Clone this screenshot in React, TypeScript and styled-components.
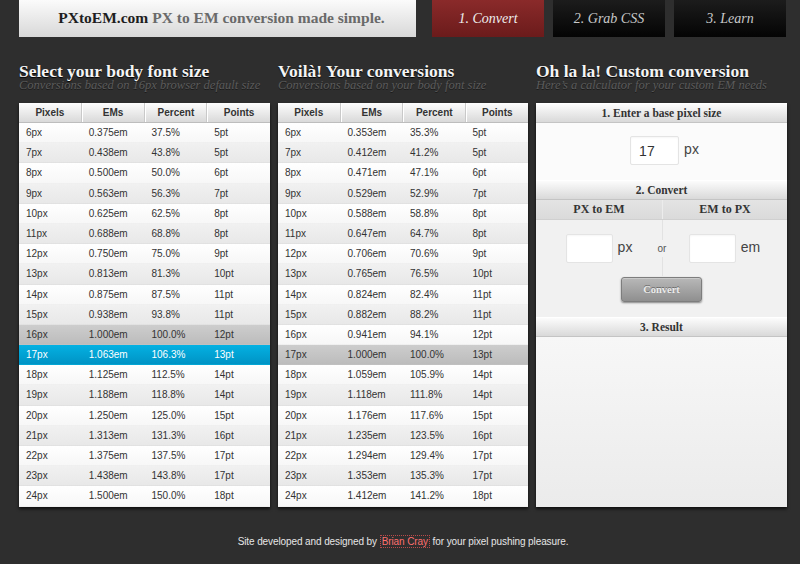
import React from "react";
import styled, { createGlobalStyle, css } from "styled-components";

const GlobalStyle = createGlobalStyle`
  html, body { margin: 0; padding: 0; background: #2e2e2e; }
  body { font-family: "Liberation Sans", Arial, sans-serif; }
  * { box-sizing: border-box; }
`;

const serif = `"Liberation Serif", "Times New Roman", serif`;
const sans = `"Liberation Sans", Arial, sans-serif`;

const Page = styled.div`
  width: 800px;
  padding: 0 13px 0 19px;
`;

const Header = styled.header`
  display: flex;
  height: 37px;
`;

const Logo = styled.div`
  width: 397px;
  height: 37px;
  background: linear-gradient(#fbfbfb, #d8d8d8);
  display: flex;
  align-items: center;
  justify-content: center;
  font-family: ${serif};
  font-weight: bold;
  font-size: 15.5px;
  color: #6a6a6a;
  padding: 0 0 1px 8px;
`;

const LogoName = styled.span`
  color: #1e1e1e;
  margin-right: 4px;
`;

const Nav = styled.nav`
  display: flex;
  gap: 9px;
  margin-left: 16px;
`;

const NavItem = styled.a<{ $active?: boolean }>`
  width: 112px;
  height: 37px;
  display: flex;
  align-items: center;
  justify-content: center;
  font-family: ${serif};
  font-style: italic;
  font-size: 14px;
  text-decoration: none;
  padding-top: 1px;
  background: ${(p) =>
    p.$active ? "linear-gradient(#8a2a2a, #6b1b1b)" : "linear-gradient(#1c1c1c, #040404)"};
  color: ${(p) => (p.$active ? "#eee" : "#c9c9c9")};
`;

const Main = styled.main`
  display: grid;
  grid-template-columns: 251px 250px 251px;
  gap: 8px;
  margin-top: 28px;
`;

const Column = styled.section`
  display: flex;
  flex-direction: column;
`;

const Title = styled.h2`
  margin: 0;
  font-family: ${serif};
  font-weight: bold;
  font-size: 17.5px;
  line-height: 13px;
  color: #f4f4f4;
  text-shadow: 0 1px 1px #000;
  white-space: nowrap;
`;

const Subtitle = styled.p`
  margin: 3px 0 14px;
  font-family: ${serif};
  font-style: italic;
  font-size: 12.5px;
  line-height: 8px;
  color: #5c5c5c;
  text-shadow: 0 1px 0 #1a1a1a;
  white-space: nowrap;
`;

const Panel = styled.div`
  height: 404px;
  background: #fff;
  box-shadow: 0 2px 3px rgba(0, 0, 0, 0.7);
  display: flex;
  flex-direction: column;
`;

const HeadRow = styled.div`
  display: grid;
  grid-template-columns: repeat(4, 1fr);
  height: 20px;
  background: linear-gradient(#fdfdfd, #d9d9d9);
  border-bottom: 1px solid #bdbdbd;
`;

const HeadCell = styled.div`
  font-family: ${sans};
  font-weight: bold;
  font-size: 10px;
  line-height: 19px;
  color: #333;
  text-align: center;
  border-left: 1px solid #fff;
  border-right: 1px solid #c9c9c9;
  &:first-child { border-left: none; }
  &:last-child { border-right: none; }
`;

type RowKind = "even" | "odd" | "base" | "selected";

const rowBg: Record<RowKind, ReturnType<typeof css>> = {
  even: css`background: linear-gradient(#ffffff, #f7f7f7); color: #333;`,
  odd: css`background: linear-gradient(#f1f1f1, #e8e8e8); color: #333;`,
  base: css`background: linear-gradient(#cdcdcd, #bcbcbc); color: #333;`,
  selected: css`background: linear-gradient(#04b1e2, #0093c5); color: #fff;`,
};

const Row = styled.div<{ $kind: RowKind }>`
  display: grid;
  grid-template-columns: repeat(4, 1fr);
  height: 20.2px;
  border-bottom: 1px solid rgba(0, 0, 0, 0.06);
  ${(p) => rowBg[p.$kind]}
`;

const Cell = styled.div`
  font-family: ${sans};
  font-size: 10px;
  line-height: 20px;
  padding-left: 7px;
`;

const leftData: string[][] = [
  ["6px", "0.375em", "37.5%", "5pt"],
  ["7px", "0.438em", "43.8%", "5pt"],
  ["8px", "0.500em", "50.0%", "6pt"],
  ["9px", "0.563em", "56.3%", "7pt"],
  ["10px", "0.625em", "62.5%", "8pt"],
  ["11px", "0.688em", "68.8%", "8pt"],
  ["12px", "0.750em", "75.0%", "9pt"],
  ["13px", "0.813em", "81.3%", "10pt"],
  ["14px", "0.875em", "87.5%", "11pt"],
  ["15px", "0.938em", "93.8%", "11pt"],
  ["16px", "1.000em", "100.0%", "12pt"],
  ["17px", "1.063em", "106.3%", "13pt"],
  ["18px", "1.125em", "112.5%", "14pt"],
  ["19px", "1.188em", "118.8%", "14pt"],
  ["20px", "1.250em", "125.0%", "15pt"],
  ["21px", "1.313em", "131.3%", "16pt"],
  ["22px", "1.375em", "137.5%", "17pt"],
  ["23px", "1.438em", "143.8%", "17pt"],
  ["24px", "1.500em", "150.0%", "18pt"],
];

const midData: string[][] = [
  ["6px", "0.353em", "35.3%", "5pt"],
  ["7px", "0.412em", "41.2%", "5pt"],
  ["8px", "0.471em", "47.1%", "6pt"],
  ["9px", "0.529em", "52.9%", "7pt"],
  ["10px", "0.588em", "58.8%", "8pt"],
  ["11px", "0.647em", "64.7%", "8pt"],
  ["12px", "0.706em", "70.6%", "9pt"],
  ["13px", "0.765em", "76.5%", "10pt"],
  ["14px", "0.824em", "82.4%", "11pt"],
  ["15px", "0.882em", "88.2%", "11pt"],
  ["16px", "0.941em", "94.1%", "12pt"],
  ["17px", "1.000em", "100.0%", "13pt"],
  ["18px", "1.059em", "105.9%", "14pt"],
  ["19px", "1.118em", "111.8%", "14pt"],
  ["20px", "1.176em", "117.6%", "15pt"],
  ["21px", "1.235em", "123.5%", "16pt"],
  ["22px", "1.294em", "129.4%", "17pt"],
  ["23px", "1.353em", "135.3%", "17pt"],
  ["24px", "1.412em", "141.2%", "18pt"],
];

function ConversionTable({
  data,
  base,
  selected,
}: {
  data: string[][];
  base: string;
  selected?: string;
}) {
  return (
    <Panel>
      <HeadRow>
        <HeadCell>Pixels</HeadCell>
        <HeadCell>EMs</HeadCell>
        <HeadCell>Percent</HeadCell>
        <HeadCell>Points</HeadCell>
      </HeadRow>
      {data.map((r, i) => {
        const kind: RowKind =
          r[0] === selected ? "selected" : r[0] === base ? "base" : i % 2 === 0 ? "even" : "odd";
        return (
          <Row key={r[0]} $kind={kind}>
            {r.map((c, j) => (
              <Cell key={j}>{c}</Cell>
            ))}
          </Row>
        );
      })}
    </Panel>
  );
}

const CalcPanel = styled(Panel)`
  background: #f2f2f2;
`;

const SectionHead = styled.div`
  height: 20px;
  background: linear-gradient(#fcfcfc, #d9d9d9);
  border-top: 1px solid #fff;
  border-bottom: 1px solid #c4c4c4;
  font-family: ${serif};
  font-weight: bold;
  font-size: 11.5px;
  line-height: 18px;
  color: #333;
  text-align: center;
`;

const BaseBody = styled.div`
  height: 57px;
  background: #fbfbfb;
  display: flex;
  justify-content: center;
  align-items: flex-start;
  padding: 13px 0 0 6px;
  gap: 5px;
`;

const TextBox = styled.input<{ $w: number }>`
  width: ${(p) => p.$w}px;
  height: 29px;
  border: 1px solid #e4e4e4;
  border-radius: 2px;
  background: #fff;
  box-shadow: inset 0 1px 2px rgba(0, 0, 0, 0.04);
  font-family: ${sans};
  font-size: 14px;
  color: #333;
  padding: 0 8px;
  outline: none;
`;

const Unit = styled.span`
  font-family: ${sans};
  font-size: 14px;
  line-height: 26px;
  color: #444;
`;

const SubHeads = styled.div`
  display: grid;
  grid-template-columns: 126px 1fr;
  height: 20px;
  background: linear-gradient(#e4e4e4, #dadada);
  border-bottom: 1px solid #d0d0d0;
`;

const SubHead = styled.div`
  font-family: ${serif};
  font-weight: bold;
  font-size: 12px;
  line-height: 19px;
  color: #333;
  text-align: center;
  & + & { border-left: 1px solid #ececec; }
`;

const ConvertBody = styled.div`
  height: 97px;
  background: #f1f1f1;
  display: flex;
  flex-direction: column;
  align-items: center;
`;

const InputsRow = styled.div`
  align-self: stretch;
  display: grid;
  grid-template-columns: 126px 0 1fr;
  height: 56px;
`;

const Half = styled.div`
  display: flex;
  justify-content: center;
  align-items: flex-start;
  padding-top: 14px;
  gap: 5px;
`;

const Divider = styled.div`
  display: flex;
  flex-direction: column;
  align-items: center;
  width: 0;
`;

const DividerLine = styled.div`
  flex: 1;
  width: 1px;
  background: #e2e2e2;
`;

const Or = styled.span`
  font-family: ${sans};
  font-size: 10px;
  line-height: 12px;
  color: #555;
  padding: 3px 0 2px;
  white-space: nowrap;
  background: #f1f1f1;
`;

const ConvertButton = styled.button`
  width: 81px;
  height: 25px;
  margin-top: 1px;
  border: 1px solid #7d7d7d;
  border-radius: 3px;
  background: linear-gradient(#b8b8b8, #8f8f8f);
  box-shadow: 0 1px 2px rgba(0, 0, 0, 0.45), inset 0 1px 0 rgba(255, 255, 255, 0.25);
  font-family: ${serif};
  font-weight: bold;
  font-size: 10.5px;
  color: #ececec;
  text-shadow: 0 -1px 0 #6d6d6d;
  padding: 0;
`;

const Result = styled.div`
  flex: 1;
  background: linear-gradient(#f7f7f7, #ebebeb);
`;

const Footer = styled.footer`
  padding: 28px 0 0;
  text-align: center;
  font-family: ${sans};
  font-size: 10px;
  line-height: 14px;
  color: #e6e6e6;
  letter-spacing: -0.1px;
`;

const AuthorLink = styled.a`
  color: #ff6f6f;
  text-decoration: none;
  border: 1px dotted #b94a4a;
  padding: 0 1px;
`;

export default function App() {
  return (
    <>
      <GlobalStyle />
      <Page>
        <Header>
          <Logo>
            <LogoName>PXtoEM.com</LogoName> PX to EM conversion made simple.
          </Logo>
          <Nav>
            <NavItem $active>1. Convert</NavItem>
            <NavItem>2. Grab CSS</NavItem>
            <NavItem>3. Learn</NavItem>
          </Nav>
        </Header>
        <Main>
          <Column>
            <Title>Select your body font size</Title>
            <Subtitle>Conversions based on 16px browser default size</Subtitle>
            <ConversionTable data={leftData} base="16px" selected="17px" />
          </Column>
          <Column>
            <Title>Voilà! Your conversions</Title>
            <Subtitle>Conversions based on your body font size</Subtitle>
            <ConversionTable data={midData} base="17px" />
          </Column>
          <Column>
            <Title>Oh la la! Custom conversion</Title>
            <Subtitle>Here’s a calculator for your custom EM needs</Subtitle>
            <CalcPanel>
              <SectionHead>1. Enter a base pixel size</SectionHead>
              <BaseBody>
                <TextBox $w={49} defaultValue="17" />
                <Unit>px</Unit>
              </BaseBody>
              <SectionHead>2. Convert</SectionHead>
              <SubHeads>
                <SubHead>PX to EM</SubHead>
                <SubHead>EM to PX</SubHead>
              </SubHeads>
              <ConvertBody>
                <InputsRow>
                  <Half>
                    <TextBox $w={47} />
                    <Unit>px</Unit>
                  </Half>
                  <Divider>
                    <DividerLine />
                    <Or>or</Or>
                    <DividerLine />
                  </Divider>
                  <Half>
                    <TextBox $w={47} />
                    <Unit>em</Unit>
                  </Half>
                </InputsRow>
                <ConvertButton>Convert</ConvertButton>
              </ConvertBody>
              <SectionHead>3. Result</SectionHead>
              <Result />
            </CalcPanel>
          </Column>
        </Main>
        <Footer>
          Site developed and designed by <AuthorLink>Brian Cray</AuthorLink> for your pixel pushing
          pleasure.
        </Footer>
      </Page>
    </>
  );
}
